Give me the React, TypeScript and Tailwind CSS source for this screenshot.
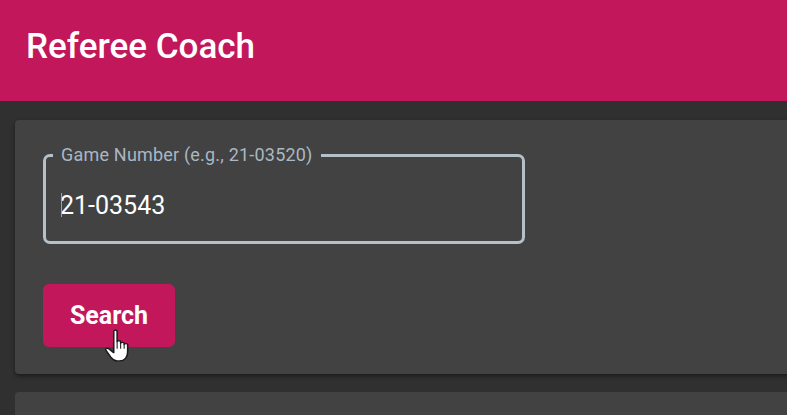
export default function App() {
  return (
    <div
      className="min-h-screen h-[415px] overflow-hidden bg-[#303030] flex flex-col"
      style={{ fontFamily: "Roboto, 'Noto Sans', sans-serif" }}
    >
      {/* Header */}
      <header className="h-[101px] shrink-0 bg-[#c2185b] flex items-center pl-[26px] pb-[8px]">
        <h1 className="text-[35px] leading-none font-medium text-white">Referee Coach</h1>
      </header>

      {/* Content */}
      <div className="flex flex-col gap-[18px] pt-[19px] pl-[15px]">
        <div className="w-[800px] shrink-0 rounded-[4px] bg-[#424242] shadow-[0_2px_4px_rgba(0,0,0,0.45)] pt-[25px] pb-[27px] pl-[28px]">
          <fieldset className="w-[482px] h-[99px] rounded-[7px] border-[3px] border-[#b4c1c8] p-0 m-0 min-w-0">
            <legend className="ml-[7px] px-[8px] text-[18px] leading-[20px] tracking-[0.2px] text-[#a9b8c4]">
              Game Number (e.g., 21-03520)
            </legend>
            <div className="relative pl-[14px] pt-[26px] text-[25px] leading-[30px] text-white">
              <span className="absolute left-[15px] top-[28px] h-[24px] w-px bg-[#9aa3a8]" />
              21-03543
            </div>
          </fieldset>

          <button
            type="button"
            className="relative mt-[40px] w-[132px] h-[63px] rounded-[6px] bg-[#c2185b] text-white text-[25px] font-bold"
          >
            Search
            <svg
              className="absolute left-[61px] top-[45px]"
              width="26"
              height="33"
              viewBox="0 0 20 30"
              preserveAspectRatio="none"
            >
              <path
                d="M7.5 2C7.5 0.7 10.1 0.7 10.1 2V11.5C10.1 10.3 12.8 10.3 12.8 11.5V13C12.8 11.8 15.5 11.8 15.5 13V14.2C15.5 13 18.2 13 18.2 14.2V21C18.2 25.5 16 29 12 29H10C7.8 29 6.5 27.5 5.2 25.5L1.5 19.5C0.7 18.2 2.3 16.8 3.6 18L7.5 21.5Z"
                fill="white"
                stroke="#1a1a1a"
                strokeWidth="1.2"
                strokeLinejoin="round"
              />
              <path d="M10.1 11.5V18M12.8 13V18M15.5 14.2V18" stroke="#1a1a1a" strokeWidth="0.8" />
            </svg>
          </button>
        </div>

        <div className="w-[800px] h-[60px] shrink-0 rounded-[4px] bg-[#424242]" />
      </div>
    </div>
  );
}
